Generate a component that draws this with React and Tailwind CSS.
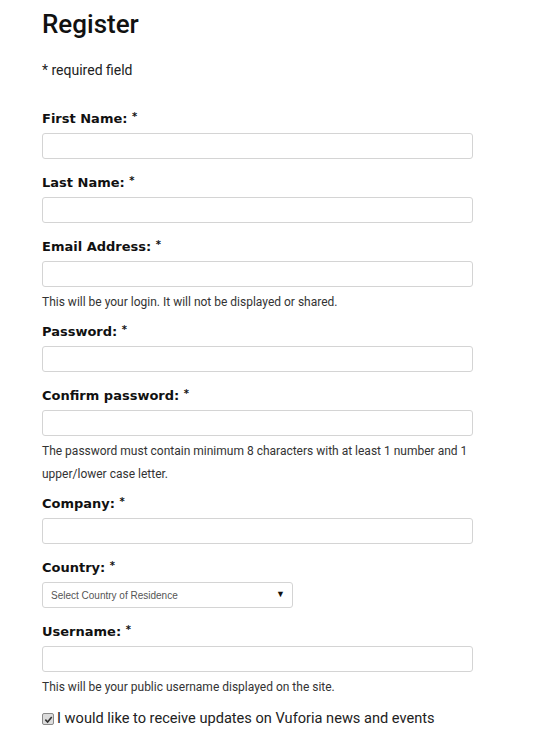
import React from "react";

const labelCls = "block h-5 leading-5 text-[13px] font-bold text-[#111] [font-family:'DejaVu_Sans',Verdana,sans-serif]";
const inputCls = "block w-[431px] h-[26px] border border-[#d4d4d4] rounded-[3px] bg-white";
const helpCls = "mt-[4px] text-[12px] leading-[23px] text-[#333] [font-family:Roboto,sans-serif]";

function Label({ children }) {
  return (
    <div className={labelCls}>
      {children} <span className="text-[10px] align-[3px]">*</span>
    </div>
  );
}

function Field({ label, help }) {
  return (
    <div className={help ? "mb-[6px]" : "mb-3"}>
      <Label>{label}</Label>
      <div className="mt-[6px]">
        <input className={inputCls} type="text" />
      </div>
      {help && <div className={helpCls}>{help}</div>}
    </div>
  );
}

export default function App() {
  return (
    <div className="bg-white w-[554px] min-h-[746px] pl-[42px] pt-[7px] [font-family:Roboto,sans-serif]">
      <h1 className="text-[26px] leading-[34px] font-medium text-[#111] [font-family:Roboto,sans-serif]">Register</h1>
      <p className="mt-[19px] text-[14px] leading-5 text-[#222]">* required field</p>
      <div className="mt-[27px]">
        <Field label="First Name:" />
        <Field label="Last Name:" />
        <Field label="Email Address:" help="This will be your login. It will not be displayed or shared." />
        <Field label="Password:" />
        <Field
          label="Confirm password:"
          help={<>The password must contain minimum 8 characters with at least 1 number and 1<br />upper/lower case letter.</>}
        />
        <Field label="Company:" />
        <div className="mb-3">
          <Label>Country:</Label>
          <div className="mt-[6px] w-[251px] h-[26px] border border-[#d4d4d4] rounded-[3px] bg-white flex items-center justify-between pl-2 pr-[7px]">
            <span className="text-[10px] text-[#555] [font-family:'Liberation_Sans',Arial,sans-serif]">Select Country of Residence</span>
            <span className="text-[9px] text-[#111]">▼</span>
          </div>
        </div>
        <Field label="Username:" help="This will be your public username displayed on the site." />
        <div className="flex items-center gap-[3px] mt-[10px] h-5">
          <span className="w-[12px] h-[12px] rounded-[2px] border border-[#8a8a8a] bg-[#dcdcdc] flex items-center justify-center">
            <svg width="9" height="9" viewBox="0 0 10 10">
              <path d="M1.5 5.2 L4 7.8 L8.6 2.2" fill="none" stroke="#333" strokeWidth="1.8" />
            </svg>
          </span>
          <span className="text-[14.6px] text-[#222] [font-family:Roboto,sans-serif]">I would like to receive updates on Vuforia news and events</span>
        </div>
      </div>
    </div>
  );
}
